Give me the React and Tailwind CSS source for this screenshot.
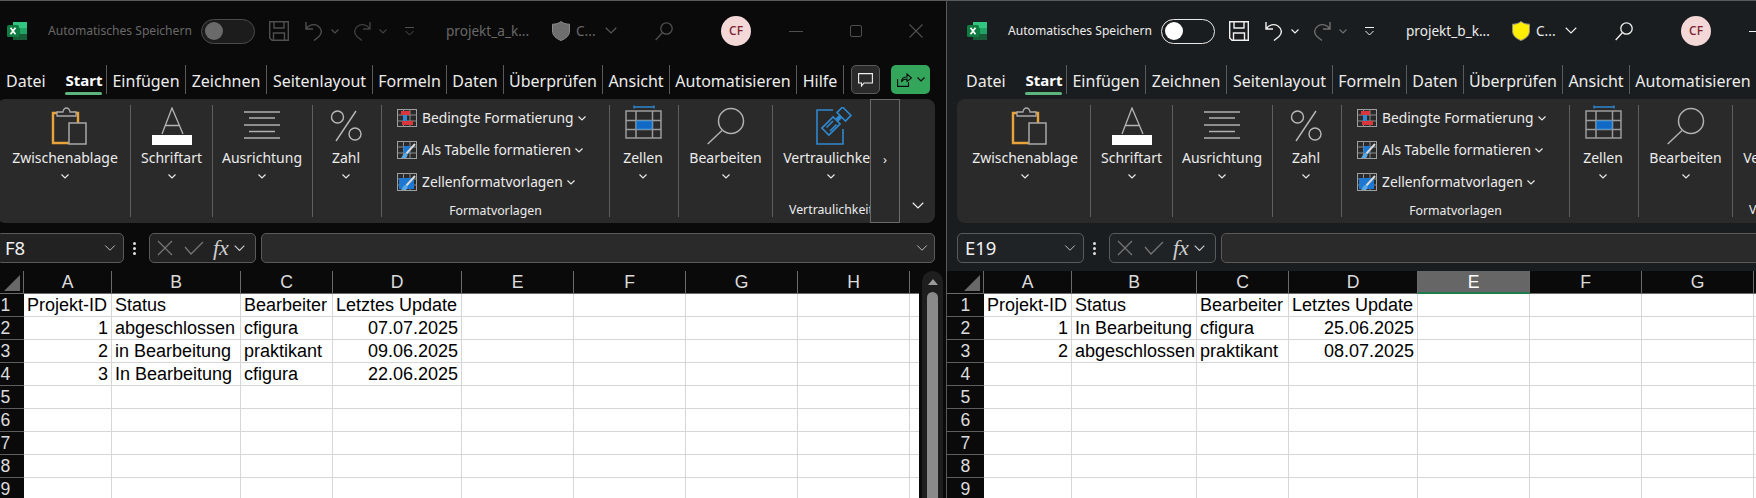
import { ChevronDown } from 'lucide-react'

const ui = "font-['Noto_Sans','Open_Sans',sans-serif]"
const sheet = "font-['Liberation_Sans',Arial,sans-serif]"

function ExcelLogo() {
  return (
    <svg width="20" height="20" viewBox="0 0 20 20" className="shrink-0">
      <rect x="6" y="1" width="14" height="18" rx="1.5" fill="#21a366" />
      <rect x="6" y="1" width="14" height="6" fill="#33c481" />
      <rect x="6" y="7" width="7" height="6" fill="#107c41" />
      <rect x="13" y="7" width="7" height="6" fill="#21a366" />
      <rect x="6" y="13" width="14" height="6" fill="#185c37" />
      <rect x="0" y="4" width="12" height="12" rx="1.5" fill="#107c41" />
      <path d="M3.5 6.7 8.5 13.3M8.5 6.7 3.5 13.3" stroke="#fff" strokeWidth="1.7" />
    </svg>
  )
}

function Save({ c }) {
  return (
    <svg width="20" height="20" viewBox="0 0 20 20" fill="none" stroke={c} strokeWidth="1.4" className="ml-[14px] shrink-0">
      <path d="M.7.7H19.3V19.3H3L.7 17Z" />
      <path d="M5 .7V7H15V.7M4.500 19.300V12H15.500V19.300" />
    </svg>
  )
}

function Undo({ c, flip, ml }) {
  return (
    <svg width="18" height="20" viewBox="0 0 18 20" fill="none" stroke={c} strokeWidth="1.4" className={`shrink-0 ${ml} ${flip}`}>
      <path d="M1 1V8H8M1 8C4 3.500 9 2.500 13 5 17 8 17.500 12 14 15.500L9 19.500" />
    </svg>
  )
}

function TinyChevron({ c, w = 8, ml = '', sw = 1.2 }) {
  return (
    <svg width={w} height={w * 0.625} viewBox="0 0 8 5" fill="none" stroke={c} strokeWidth={sw} className={`shrink-0 ${ml}`}>
      <path d="M.5.5 4 4 7.500.5" />
    </svg>
  )
}

function Customize({ c }) {
  return (
    <svg width="9" height="9" viewBox="0 0 9 9" fill="none" stroke={c} strokeWidth="1" className="ml-[18px] shrink-0">
      <path d="M0 .5H9M.5 4 4.500 8 8.500 4" />
    </svg>
  )
}

function Shield({ fill }) {
  return (
    <svg width="18" height="20" viewBox="0 0 18 20" className="ml-[21px] shrink-0">
      <path d="M9 .5C11.500 2.500 14 3.200 17.500 3.200V10C17.500 14.500 14 17.500 9 19.500 4 17.500.5 14.500.5 10V3.200C4 3.200 6.500 2.500 9 .5Z" fill={fill} stroke="#8a8a8a" />
    </svg>
  )
}

function Search({ c }) {
  return (
    <svg width="18" height="19" viewBox="0 0 18 19" fill="none" stroke={c} strokeWidth="1.300" className="ml-[38px] shrink-0">
      <circle cx="11.500" cy="6.500" r="5.700" />
      <path d="M7.300 10.700.7 18" />
    </svg>
  )
}

function TitleBar({ active, title }) {
  const icon = active ? '#f0f0f0' : '#4f4f4f'
  const off = active ? '#6e6e6e' : '#3f3f3f'
  const text = active ? 'text-[#ececec]' : 'text-[#686868]'
  return (
    <div className={`flex h-[60px] items-center pl-[20px] ${ui} text-[12.100px]`}>
      <ExcelLogo />
      <span className={`ml-[21px] w-[145px] shrink-0 whitespace-nowrap ${text}`}>Automatisches Speichern</span>
      <div className={`ml-[8px] flex h-[25px] w-[54px] shrink-0 items-center rounded-full border pl-[3px] ${active ? 'border-[#e8e8e8]' : 'border-[#4a4a4a] bg-[#1c1c1c]'}`}>
        <div className={`h-[18px] w-[18px] rounded-full ${active ? 'bg-white' : 'bg-[#6a6a6a]'}`} />
      </div>
      <Save c={icon} />
      <Undo c={icon} ml="ml-[16px]" />
      <TinyChevron c={icon} ml="ml-[8px]" />
      <Undo c={off} ml="ml-[14px]" flip="-scale-x-100" />
      <TinyChevron c={off} ml="ml-[8px]" />
      <Customize c={icon} />
      <span className={`ml-[32px] w-[85px] shrink-0 whitespace-nowrap text-[13.600px] ${text}`}>{title}</span>
      <Shield fill={active ? '#ffee00' : '#6e6e6e'} />
      <span className={`ml-[6px] w-[19px] shrink-0 whitespace-nowrap text-[13.600px] ${text}`}>C...</span>
      <TinyChevron c={active ? '#f0f0f0' : '#5a5a5a'} w={12} sw={0.75} ml="ml-[10px]" />
      <Search c={active ? '#f0f0f0' : '#4f4f4f'} />
      <div className="ml-[48px] flex h-[30px] w-[30px] shrink-0 items-center justify-center rounded-full bg-[#f4d7d7] text-[12px] font-medium text-[#7a2230]">CF</div>
      <div className={`ml-[38px] h-px w-[14px] shrink-0 ${active ? 'bg-[#f0f0f0]' : 'bg-[#4f4f4f]'}`} />
      <div className={`ml-[47px] h-[12px] w-[12px] shrink-0 rounded-[2px] border ${active ? 'border-[#f0f0f0]' : 'border-[#4f4f4f]'}`} />
      <svg width="14" height="14" viewBox="0 0 14 14" stroke={icon} strokeWidth="1.100" className="ml-[47px] shrink-0">
        <path d="M.5.5 13.500 13.500M13.500.5.5 13.500" />
      </svg>
    </div>
  )
}

const tabs = [
  ['Einfügen', 'w-[79px]'],
  ['Zeichnen', 'w-[81px]'],
  ['Seitenlayout', 'w-[106px]'],
  ['Formeln', 'w-[74px]'],
  ['Daten', 'w-[57px]'],
  ['Überprüfen', 'w-[99px]'],
  ['Ansicht', 'w-[67px]'],
  ['Automatisieren', 'w-[127px]'],
  ['Hilfe', 'w-[47px]'],
]

function TabRow() {
  return (
    <div className={`mt-[4px] flex h-[34px] ${ui} text-[16px] text-[#ececec]`}>
      <div className="flex h-[29px] w-[73px] shrink-0 items-center pl-[19px] pt-[2px]">Datei</div>
      <div className="relative flex h-[29px] w-[47px] shrink-0 items-center justify-center border-r border-[#5a5a5a] pl-[2px] pt-[2px] text-[15px] font-bold text-white">
        Start
        <span className="absolute bottom-[-1px] left-[5px] h-[3px] w-[37px] rounded-full bg-[#5cb57d]" />
      </div>
      {tabs.map(([name, w]) => (
        <div key={name} className={`flex h-[29px] shrink-0 items-center justify-center whitespace-nowrap border-r border-[#5a5a5a] pt-[2px] ${w}`}>
          {name}
        </div>
      ))}
      <div className="ml-[7px] flex h-[29px] w-[29px] shrink-0 items-center justify-center rounded-[5px] border border-[#5a5a5a] bg-[#2a2a2a]">
        <svg width="15" height="14" viewBox="0 0 15 14" fill="none" stroke="#f0f0f0" strokeWidth="1.100">
          <path d="M.6.6H14.400V10H6L3.500 13V10H.6Z" />
        </svg>
      </div>
      <div className="ml-[11px] flex h-[29px] w-[39px] shrink-0 items-center justify-center gap-[5px] rounded-[5px] bg-[#33a65c]">
        <svg width="15" height="15" viewBox="0 0 15 15" fill="none" stroke="#0c0c0c" strokeWidth="1.100">
          <path d="M.6 7V14.400H11.500V10M4.500 10C4.500 6.500 6.500 5 10 5V2L14.500 6 10 9.500V7C7.500 7 5.500 8 4.500 10Z" />
        </svg>
        <TinyChevron c="#0c0c0c" />
      </div>
    </div>
  )
}

function BigButton({ icon, label, className = '' }) {
  return (
    <div className={`flex flex-col items-center pt-[6px] ${className}`}>
      <div className="flex h-[43px] items-start justify-center">{icon}</div>
      <div className="-mt-[1px] flex h-[20px] items-center whitespace-nowrap text-[14px] text-[#ececec]">{label}</div>
      <TinyChevron c="#e8e8e8" ml="mt-[7px]" />
    </div>
  )
}

function Sep() {
  return <div className="my-[6px] w-px shrink-0 bg-[#5e5e5e]" />
}

const clipboardIcon = (
  <svg width="36" height="40" viewBox="0 0 36 40" fill="none" className="ml-[8px] mt-[2px]">
    <path d="M7 6H2V36H18M22 6H27V16" stroke="#e8a33a" strokeWidth="2.400" />
    <path d="M6 9V5H12C12.500 2 14 1 15.500 1S18.500 2 19 5H25V9Z" stroke="#a8a8a8" strokeWidth="1.300" fill="#2a2a2a" />
    <rect x="18" y="16" width="17" height="21" stroke="#a8a8a8" strokeWidth="1.500" fill="#2a2a2a" />
  </svg>
)

const fontIcon = (
  <svg width="40" height="39" viewBox="0 0 40 39" fill="none" className="mt-[2px]">
    <path d="M10 27 20 1 31 27M13 18.500H28" stroke="#b5b5b5" strokeWidth="1.300" />
    <rect x="0" y="28" width="40" height="10" fill="#fff" />
  </svg>
)

const alignIcon = (
  <svg width="36" height="28" viewBox="0 0 36 28" stroke="#b0b0b0" strokeWidth="1.300" className="mt-[6px]">
    <path d="M0 1H36M5 7H31M0 14H36M5 20.500H31M0 27H36" />
  </svg>
)

const percentIcon = (
  <svg width="32" height="32" viewBox="0 0 32 32" fill="none" stroke="#b8b8b8" strokeWidth="1.400" className="mt-[5px]">
    <circle cx="7.500" cy="7" r="6" />
    <circle cx="25" cy="24" r="6" />
    <path d="M26 1 6 31" />
  </svg>
)

const cellsIcon = (
  <svg width="38" height="36" viewBox="0 0 38 36" fill="none" className="-mt-[1px]">
    <path d="M10 1.500V4.500M30 1.500V4.500M10 3H30" stroke="#2f88d0" strokeWidth="1.300" />
    <rect x="2" y="7" width="35" height="27" stroke="#9c9c9c" strokeWidth="1.500" />
    <path d="M2 16.500H37M2 25.500H37M12 7V34M28.500 7V34" stroke="#9c9c9c" strokeWidth="1.500" />
    <rect x="12.500" y="17" width="15.500" height="8" fill="#1069c4" stroke="#2f88d0" />
  </svg>
)

const findIcon = (
  <svg width="38" height="38" viewBox="0 0 38 38" fill="none" stroke="#b0b0b0" strokeWidth="1.500" className="mt-[2px]">
    <circle cx="24" cy="14" r="12.500" />
    <path d="M15 23.500.7 37" />
  </svg>
)

const sensitivityIcon = (
  <svg width="38" height="39" viewBox="0 0 38 39" fill="none" stroke="#2f88d0" strokeWidth="1.600" className="ml-[8px] mt-[2px]">
    <path d="M17 3H1V37H27V22" />
    <path d="M12.900 28.100 5.900 21.100 17.100 9.900 24.100 16.900Z" fill="#2a2a2a" />
    <path d="M10.500 20.500 17 14M14 24 20.500 17.500" />
    <path d="M21 13 25 9" strokeWidth="4" />
    <path d="M29.400 14 21 5.600 26.600 0 35 8.400Z" fill="#2a2a2a" />
  </svg>
)

function ListIcon({ type }) {
  return (
    <svg width="20" height="18" viewBox="0 0 20 18" fill="none" className="shrink-0">
      <rect x=".5" y=".5" width="19" height="17" stroke="#a0a0a0" fill="#2a2a2a" />
      <path d="M.5 6H19.500M.5 12H19.500M6.500.5V17.500M13 .5V17.500" stroke="#8c8c8c" />
      {type === 'cond' && (
        <>
          <rect x="4" y="2" width="9" height="4" fill="#d9363e" />
          <rect x="6" y="6" width="4" height="6" fill="#2f88d0" />
          <rect x="5" y="12" width="11" height="4" fill="#d9363e" />
        </>
      )}
      {type !== 'cond' && (
        <>
          <rect x={type === 'table' ? 6.500 : 2} y="5" width={type === 'table' ? 6.500 : 15} height={type === 'table' ? 7 : 11} fill="#1c78d0" />
          <path d="M18 3 9 13" stroke="#d8d8d8" strokeWidth="2" />
          <path d="M9 12C6 12 6 15 4 17H9C10.500 16 11 14 10 12.500Z" fill="#5aa7e6" />
        </>
      )}
    </svg>
  )
}

function ListRow({ type, label }) {
  return (
    <div className="flex h-[20px] items-center text-[13.800px] text-[#ececec]">
      <ListIcon type={type} />
      <span className="ml-[5px] whitespace-nowrap">{label}</span>
      <TinyChevron c="#e8e8e8" ml="ml-[4px]" />
    </div>
  )
}

function Ribbon() {
  return (
    <div className={`ml-[10px] flex h-[124px] w-[938px] rounded-[8px] bg-[#2a2a2a] ${ui}`}>
      <BigButton icon={clipboardIcon} label="Zwischenablage" className="w-[133px] shrink-0 pl-[3px]" />
      <Sep />
      <BigButton icon={fontIcon} label="Schriftart" className="w-[81px] shrink-0" />
      <Sep />
      <BigButton icon={alignIcon} label="Ausrichtung" className="w-[99px] shrink-0 pr-[1px]" />
      <Sep />
      <BigButton icon={percentIcon} label="Zahl" className="w-[68px] shrink-0 pr-[2px]" />
      <Sep />
      <div className="flex w-[227px] shrink-0 flex-col pl-[15px] pt-[9px]">
        <div className="flex flex-col gap-[12px]">
          <ListRow type="cond" label="Bedingte Formatierung" />
          <ListRow type="table" label="Als Tabelle formatieren" />
          <ListRow type="style" label="Zellenformatvorlagen" />
        </div>
        <div className="mt-[10px] flex h-[18px] items-center justify-center pr-[15px] text-[12.300px] text-[#ececec]">Formatvorlagen</div>
      </div>
      <Sep />
      <BigButton icon={cellsIcon} label="Zellen" className="w-[68px] shrink-0 pr-[2px]" />
      <Sep />
      <BigButton icon={findIcon} label="Bearbeiten" className="w-[93px] shrink-0" />
      <Sep />
      <div className="w-[97px] shrink-0 overflow-hidden">
        <div className="flex w-[116px] flex-col">
          <BigButton icon={sensitivityIcon} label="Vertraulichkeit" />
          <div className="mt-[22px] flex h-[18px] items-center justify-center whitespace-nowrap text-[12.300px] text-[#ececec]">Vertraulichkeit</div>
        </div>
      </div>
      <div className="flex h-full w-[30px] shrink-0 items-center justify-center border border-[#6a6a6a] pb-[2px] text-[13px] text-[#e8e8e8]">›</div>
      <div className="flex flex-1 items-end justify-center pb-[14px]">
        <TinyChevron c="#f0f0f0" w={12} sw={0.75} />
      </div>
    </div>
  )
}

function FormulaBar({ cell, active }) {
  const box = active ? 'bg-[#202325]' : 'bg-[#222222]'
  return (
    <div className={`ml-[10px] mt-[10px] flex h-[30px] items-center ${ui}`}>
      <div className={`flex h-[30px] w-[127px] shrink-0 items-center justify-between rounded-[5px] border border-[#5a5a5a] pl-[7px] pr-[4px] text-[18.500px] text-[#f0f0f0] ${box}`}>
        {cell}
        <ChevronDown size={18} strokeWidth={1.100} color="#d8d8d8" />
      </div>
      <div className="ml-[9px] flex w-[4px] shrink-0 flex-col gap-[2px]">
        <span className="h-[3px] w-[3px] rounded-full bg-[#e0e0e0]" />
        <span className="h-[3px] w-[3px] rounded-full bg-[#e0e0e0]" />
        <span className="h-[3px] w-[3px] rounded-full bg-[#e0e0e0]" />
      </div>
      <div className={`ml-[12px] flex h-[30px] w-[107px] shrink-0 items-center rounded-[5px] border border-[#5a5a5a] pl-[7px] ${box}`}>
        <svg width="16" height="16" viewBox="0 0 16 16" stroke="#777" strokeWidth="1.200" className="shrink-0">
          <path d="M1 1 15 15M15 1 1 15" />
        </svg>
        <svg width="20" height="14" viewBox="0 0 20 14" fill="none" stroke="#777" strokeWidth="1.200" className="ml-[11px] shrink-0">
          <path d="M1 6 7 13 19 1" />
        </svg>
        <span className="ml-[9px] w-[18px] font-['Liberation_Serif',serif] text-[22px] italic leading-none text-[#cfcfcf]">fx</span>
        <TinyChevron c="#c8c8c8" w={11} sw={0.85} ml="ml-[3px]" />
      </div>
      <div className="ml-[5px] flex h-[30px] w-[674px] shrink-0 items-center justify-end rounded-[5px] border border-[#5a5a5a] bg-[#2a2a2a] pr-[3px]">
        <ChevronDown size={18} strokeWidth={1.100} color="#d8d8d8" />
      </div>
    </div>
  )
}

const columns = ['A', 'B', 'C', 'D', 'E', 'F', 'G', 'H', 'I']
const rowNumbers = [1, 2, 3, 4, 5, 6, 7, 8, 9]

function Sheet({ widths, rows, selected }) {
  return (
    <div className={`w-[932px] shrink-0 overflow-hidden ${sheet}`}>
      <div className="flex h-[23px] text-[17.600px] leading-[22px] text-[#dcdcdc]">
        <div className="relative w-[37px] shrink-0 border-r border-b border-[#6a6a6a] bg-[#0a0a0a]">
          <svg width="16" height="16" viewBox="0 0 16 16" className="absolute bottom-[2px] right-[3px]">
            <path d="M16 0V16H0Z" fill="#686868" />
          </svg>
        </div>
        {columns.map((c, i) => (
          <div
            key={c}
            className={`shrink-0 border-r text-center ${widths[i]} ${c === selected ? 'border-b-2 border-r-[#6a6a6a] border-b-[#1f7a4c] bg-[#666666] text-white' : 'border-b border-[#6a6a6a] bg-[#0a0a0a]'}`}
          >
            {c}
          </div>
        ))}
      </div>
      {rowNumbers.map((n, r) => (
        <div key={n} className="flex h-[23px] text-[18px] leading-[22px]">
          <div className="w-[37px] shrink-0 border-b border-[#5e5e5e] bg-[#0a0a0a] text-center text-[17.600px] text-[#dcdcdc]">{n}</div>
          {columns.map((c, i) => {
            const value = rows[r]?.[i]
            const isNumber = typeof value === 'number' || /^\d\d\./.test(value ?? '')
            return (
              <div
                key={c}
                className={`shrink-0 whitespace-nowrap border-b border-r border-[#d6d6d6] bg-white pl-[3px] pr-[3px] text-black ${widths[i]} ${isNumber ? 'text-right' : 'text-left'}`}
              >
                {value}
              </div>
            )
          })}
        </div>
      ))}
    </div>
  )
}

function Scrollbar() {
  return (
    <div className="ml-[3px] h-[227px] w-[21px] shrink-0 rounded-t-full bg-[#1e1e1e]">
      <div className="flex h-[21px] items-center justify-center">
        <div className="h-0 w-0 border-x-[5px] border-b-[6px] border-x-transparent border-b-[#9a9a9a]" />
      </div>
      <div className="mx-auto h-full w-[11px] rounded-t-full bg-[#8a8a8a]" />
    </div>
  )
}

function ExcelWindow({ active, title, cell, widths, rows, selected, className }) {
  return (
    <div className={`h-[497px] w-[959px] shrink-0 ${className}`}>
      <TitleBar active={active} title={title} />
      <TabRow />
      <Ribbon />
      <FormulaBar cell={cell} active={active} />
      <div className="mt-[8px] flex">
        <Sheet widths={widths} rows={rows} selected={selected} />
        <Scrollbar />
      </div>
    </div>
  )
}

const leftRows = [
  ['Projekt-ID', 'Status', 'Bearbeiter', 'Letztes Update'],
  [1, 'abgeschlossen', 'cfigura', '07.07.2025'],
  [2, 'in Bearbeitung', 'praktikant', '09.06.2025'],
  [3, 'In Bearbeitung', 'cfigura', '22.06.2025'],
]

const rightRows = [
  ['Projekt-ID', 'Status', 'Bearbeiter', 'Letztes Update'],
  [1, 'In Bearbeitung', 'cfigura', '25.06.2025'],
  [2, 'abgeschlossen', 'praktikant', '08.07.2025'],
]

const leftWidths = ['w-[88px]', 'w-[129px]', 'w-[92px]', 'w-[129px]', 'w-[112px]', 'w-[112px]', 'w-[112px]', 'w-[112px]', 'w-[112px]']
const rightWidths = ['w-[88px]', 'w-[125px]', 'w-[92px]', 'w-[129px]', 'w-[112px]', 'w-[112px]', 'w-[112px]', 'w-[112px]', 'w-[112px]']

export default function App() {
  return (
    <div className="flex h-[498px] w-[1756px] flex-col overflow-hidden bg-black">
      <div className="h-px shrink-0 bg-[#5a5a5a]" />
      <div className="flex flex-1 overflow-hidden">
        <div className="w-[946px] shrink-0 overflow-hidden bg-[#0a0a0a]">
          <ExcelWindow title="projekt_a_k..." cell="F8" widths={leftWidths} rows={leftRows} className="-ml-[13px]" />
        </div>
        <div className="w-px shrink-0 bg-[#5a5a5a]" />
        <div className="flex-1 overflow-hidden bg-[#1a1d1f]">
          <ExcelWindow active title="projekt_b_k..." cell="E19" widths={rightWidths} rows={rightRows} selected="E" />
        </div>
      </div>
    </div>
  )
}
